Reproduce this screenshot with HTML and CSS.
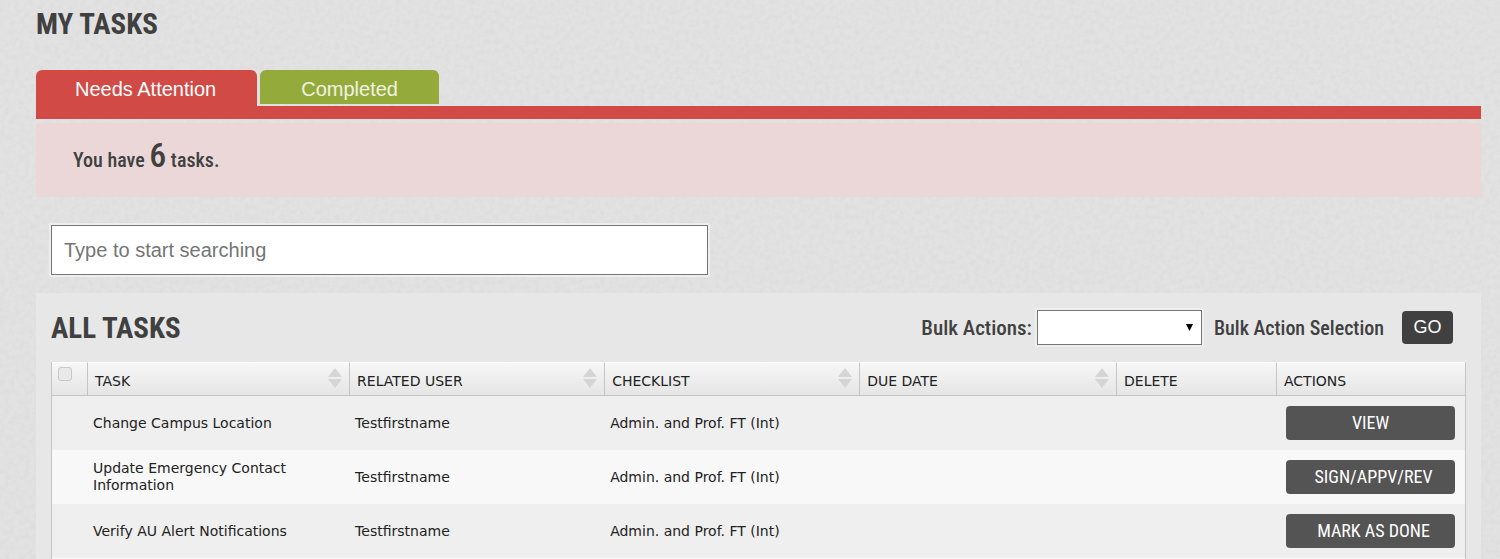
FILE: index.html
```html
<!DOCTYPE html>
<html lang="en">
<head>
<meta charset="utf-8">
<meta name="viewport" content="width=device-width, initial-scale=1">
<title>My Tasks</title>
<link rel="stylesheet" href="styles.css">
</head>
<body>
<main class="page">
  <h1 class="title">MY TASKS</h1>
  <nav class="tabs">
    <button class="tab tab-active" type="button">Needs Attention</button>
    <button class="tab tab-done" type="button">Completed</button>
  </nav>
  <p class="notice">You have <strong class="count">6</strong> tasks.</p>
  <input class="search" type="text" placeholder="Type to start searching" aria-label="Search tasks">
  <section class="panel">
    <header class="panel-head">
      <h2 class="title">ALL TASKS</h2>
      <form class="bulk">
        <label class="bulk-label" for="bulk">Bulk Actions:</label>
        <span class="select-wrap">
          <select class="bulk-select" id="bulk"><option></option></select>
          <svg class="caret" viewBox="0 0 7 7" aria-hidden="true"><path d="M0 0h7L3.500 7z"/></svg>
        </span>
        <span class="bulk-text">Bulk Action Selection</span>
        <button class="go" type="button">GO</button>
      </form>
    </header>
    <table class="tasks">
      <colgroup><col class="col-check"><col class="col-task"><col class="col-user"><col class="col-list"><col><col class="col-delete"><col class="col-actions"></colgroup>
      <thead>
        <tr>
          <th class="check-cell"><input class="check" type="checkbox" aria-label="Select all tasks"></th>
          <th><div class="head">TASK<svg class="sort" viewBox="0 0 14 20" aria-hidden="true"><path d="M7 0l7 9H0zM0 11h14l-7 9z"/></svg></div></th>
          <th><div class="head">RELATED USER<svg class="sort" viewBox="0 0 14 20" aria-hidden="true"><path d="M7 0l7 9H0zM0 11h14l-7 9z"/></svg></div></th>
          <th><div class="head">CHECKLIST<svg class="sort" viewBox="0 0 14 20" aria-hidden="true"><path d="M7 0l7 9H0zM0 11h14l-7 9z"/></svg></div></th>
          <th><div class="head">DUE DATE<svg class="sort" viewBox="0 0 14 20" aria-hidden="true"><path d="M7 0l7 9H0zM0 11h14l-7 9z"/></svg></div></th>
          <th><div class="head">DELETE</div></th>
          <th><div class="head">ACTIONS</div></th>
        </tr>
      </thead>
      <tbody>
        <tr><td></td><td>Change Campus Location</td><td>Testfirstname</td><td>Admin. and Prof. FT (Int)</td><td></td><td></td><td class="action-cell"><button class="action" type="button">VIEW</button></td></tr>
        <tr><td></td><td>Update Emergency Contact Information</td><td>Testfirstname</td><td>Admin. and Prof. FT (Int)</td><td></td><td></td><td class="action-cell"><button class="action action-long" type="button">SIGN/APPV/REV</button></td></tr>
        <tr><td></td><td>Verify AU Alert Notifications</td><td>Testfirstname</td><td>Admin. and Prof. FT (Int)</td><td></td><td></td><td class="action-cell"><button class="action action-long" type="button">MARK AS DONE</button></td></tr>
      </tbody>
    </table>
  </section>
</main>
</body>
</html>
```
FILE: styles.css
```css
* { box-sizing: border-box; }

body {
  --condensed: "Roboto Condensed", Roboto, sans-serif;
  margin: 0;
  color: #404040;
  font-family: "Liberation Sans", Arial, sans-serif;
  background: #e2e2e2 url("data:image/svg+xml,%3Csvg xmlns='http://www.w3.org/2000/svg' width='300' height='300'%3E%3Cfilter id='n'%3E%3CfeTurbulence type='fractalNoise' baseFrequency='.2' numOctaves='3' stitchTiles='stitch'/%3E%3CfeColorMatrix values='0 0 0 0 .5 0 0 0 0 .5 0 0 0 0 .5 .26 0 0 0 -.09'/%3E%3C/filter%3E%3Crect width='300' height='300' filter='url(%23n)'/%3E%3C/svg%3E");
}

.page { padding: 0 19px 0 36px; }

.title {
  margin: 0;
  font: bold 29px/48px var(--condensed);
}

.tabs {
  display: flex;
  align-items: flex-start;
  gap: 3px;
  margin-top: 22px;
  border-bottom: 13px solid #d24a46;
}

.tab {
  height: 34px;
  padding: 0 41px;
  border: 0;
  border-radius: 6px 6px 0 0;
  color: #fff;
  font: 20px/38px "Liberation Sans", Arial, sans-serif;
}

.tab-active { height: 36px; padding: 0 41px 0 39px; background: #d24a46; }
.tab-done { background: #94ab3c; color: #f0f3e2; }

.notice {
  height: 74px;
  margin: 4px 0 28px;
  padding-left: 37px;
  background: #ebd7d8;
  font: 500 20px/64px var(--condensed);
}

.count { font-size: 34px; font-weight: 500; }

.search {
  display: block;
  width: 45.5%;
  height: 50px;
  margin: 0 0 18px 15px;
  padding: 0 12px;
  border: 1px solid #757575;
  border-radius: 0;
  box-shadow: 0 0 0 2px #eee;
  background: #fff;
  color: #404040;
  font: 20px "Liberation Sans", Arial, sans-serif;
}

.search::placeholder { color: #757575; }

.panel { padding: 0 15px; background: #e7e7e7; }

.panel-head {
  display: flex;
  align-items: center;
  justify-content: space-between;
  height: 69px;
}

.bulk { display: flex; align-items: center; padding-right: 13px; }

.bulk-label {
  margin-right: 5px;
  font: 500 21px/30px var(--condensed);
}

.select-wrap { position: relative; display: flex; }

.bulk-select {
  width: 165px;
  height: 35px;
  appearance: none;
  border: 1px solid #757575;
  border-radius: 0;
  box-shadow: 0 0 0 2px #eee;
  background: #fff;
}

.caret {
  position: absolute;
  top: 14px;
  right: 9px;
  width: 7px;
  height: 7px;
  pointer-events: none;
}

.bulk-text {
  margin: 0 18px 0 12px;
  font: 500 20px/30px var(--condensed);
}

.go {
  width: 51px;
  height: 33px;
  padding: 0;
  border: 0;
  border-radius: 4px;
  background: #404040;
  color: #fff;
  font: 18px "Liberation Sans", Arial, sans-serif;
}

.tasks {
  width: 100%;
  table-layout: fixed;
  border-collapse: separate;
  border-spacing: 0;
  border: solid #c5c5c5;
  border-width: 0 1px;
  color: #222;
  font: 14px/17px "DejaVu Sans", Verdana, sans-serif;
}

.col-check { width: 36px; }
.col-task { width: 18.55%; }
.col-user, .col-list { width: 18.05%; }
.col-delete { width: 160px; }
.col-actions { width: 188px; }

th {
  height: 34px;
  padding: 0 7px;
  border-top: 1px solid #fff;
  border-right: 1px solid #c5c5c5;
  border-bottom: 1px solid #c5c5c5;
  background: linear-gradient(#f7f7f7, #e5e5e5);
  font-weight: normal;
  text-align: left;
  vertical-align: top;
}

th:last-child { border-right: 0; }

.head {
  display: flex;
  align-items: flex-start;
  justify-content: space-between;
  padding-top: 5px;
  line-height: 26px;
}

.sort { width: 14px; height: 20px; fill: #d5d5d5; }

.check-cell { padding: 4px 6px; }

.check {
  display: block;
  width: 14px;
  height: 14px;
  margin: 0;
  appearance: none;
  border: 1px solid #c8c8c8;
  border-radius: 3px;
  background: #e9e9e9;
}

td { height: 54px; padding: 0 50px 0 5px; background: #efefef; }
td:nth-child(4) { padding-right: 5px; }
tr:nth-child(even) td { background: #f8f8f8; }
tbody tr:last-child td { height: 55px; border-bottom: 1px solid #f8f8f8; }

.tasks .action-cell { padding: 0 10px 0 9px; }

.action {
  display: block;
  width: 100%;
  height: 34px;
  padding: 0;
  border: 0;
  border-radius: 4px;
  background: #545454;
  color: #fff;
  font: 18px/32px var(--condensed);
}

.action-long { padding-left: 6px; }
```
